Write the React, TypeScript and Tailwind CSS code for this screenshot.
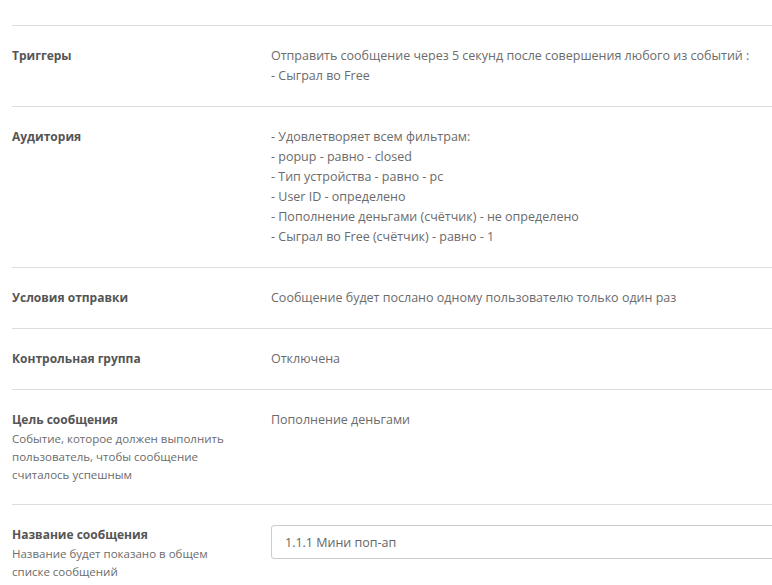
import React from 'react';

interface RowProps {
  label: string;
  hint?: string;
  children: React.ReactNode;
}

const Row: React.FC<RowProps> = ({ label, hint, children }) => (
  <div className="flex border-t border-[#dddddd] py-5">
    <div className="w-[259px] shrink-0 pr-4">
      <div className="text-[12px] font-bold leading-5 text-[#555555]">{label}</div>
      {hint && <div className="w-[218px] text-[11.5px] leading-[18px] text-[#6b6b6b]">{hint}</div>}
    </div>
    <div className="flex-1 text-[12.5px] leading-5 text-[#6b6b6b]">{children}</div>
  </div>
);

export default function App() {
  return (
    <div className="min-h-screen overflow-hidden bg-white pl-3 pt-[25px] font-['Open_Sans',sans-serif]">
      <div className="w-[780px]">
        <Row label="Триггеры">
          <div>Отправить сообщение через 5 секунд после совершения любого из событий :</div>
          <div>- Сыграл во Free</div>
        </Row>
        <Row label="Аудитория">
          <div>- Удовлетворяет всем фильтрам:</div>
          <div>- popup - равно - closed</div>
          <div>- Тип устройства - равно - pc</div>
          <div>- User ID - определено</div>
          <div>- Пополнение деньгами (счётчик) - не определено</div>
          <div>- Сыграл во Free (счётчик) - равно - 1</div>
        </Row>
        <Row label="Условия отправки">
          <div>Сообщение будет послано одному пользователю только один раз</div>
        </Row>
        <Row label="Контрольная группа">
          <div>Отключена</div>
        </Row>
        <Row label="Цель сообщения" hint="Событие, которое должен выполнить пользователь, чтобы сообщение считалось успешным">
          <div>Пополнение деньгами</div>
        </Row>
        <Row label="Название сообщения" hint="Название будет показано в общем списке сообщений">
          <input
            defaultValue="1.1.1 Мини поп-ап"
            className="h-[34px] w-full rounded-[3px] border border-[#cccccc] px-[13px] text-[12.5px] text-[#666666] outline-none"
          />
        </Row>
      </div>
    </div>
  );
}
